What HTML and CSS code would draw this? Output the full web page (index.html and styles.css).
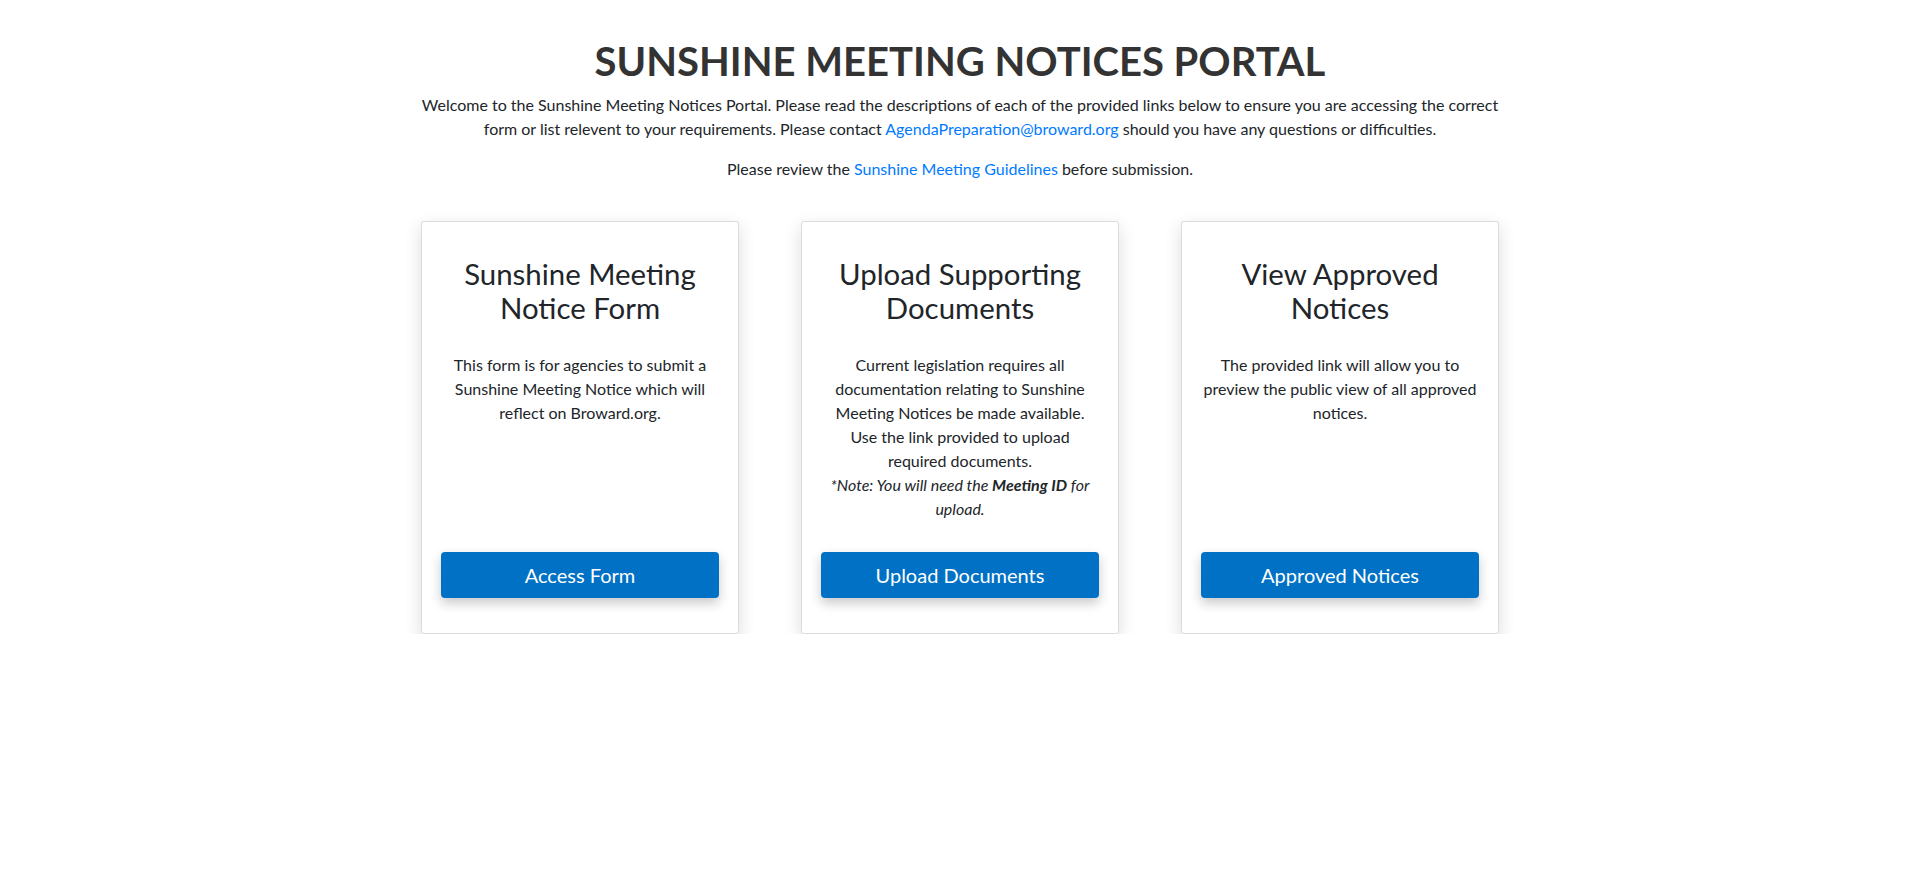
FILE: index.html
```html
<!DOCTYPE html>
<html lang="en">
<head>
<meta charset="utf-8">
<title>Sunshine Meeting Notices Portal</title>
<link rel="stylesheet" href="styles.css">
</head>
<body>
<main class="container">
  <header class="intro">
    <h1 class="page-title">SUNSHINE MEETING NOTICES PORTAL</h1>
    <p>Welcome to the Sunshine Meeting Notices Portal. Please read the descriptions of each of the provided links below to ensure you are accessing the correct form or list relevent to your requirements. Please contact <a href="#">AgendaPreparation@broward.org</a> should you have any questions or difficulties.</p>
    <p>Please review the <a href="#">Sunshine Meeting Guidelines</a> before submission.</p>
  </header>
  <section class="cards">
    <div class="col">
      <article class="card">
        <h3 class="card-title">Sunshine Meeting Notice Form</h3>
        <p class="card-text">This form is for agencies to submit a Sunshine Meeting Notice which will reflect on Broward.org.</p>
        <a class="btn" href="#">Access Form</a>
      </article>
    </div>
    <div class="col">
      <article class="card">
        <h3 class="card-title">Upload Supporting Documents</h3>
        <p class="card-text">Current legislation requires all documentation relating to Sunshine Meeting Notices be made available. Use the link provided to upload required documents.<br><em>*Note: You will need the <strong>Meeting ID</strong> for upload.</em></p>
        <a class="btn" href="#">Upload Documents</a>
      </article>
    </div>
    <div class="col">
      <article class="card">
        <h3 class="card-title">View Approved Notices</h3>
        <p class="card-text">The provided link will allow you to preview the public view of all approved notices.</p>
        <a class="btn" href="#">Approved Notices</a>
      </article>
    </div>
  </section>
</main>
</body>
</html>
```
FILE: styles.css
```css
* { box-sizing: border-box; }
html, body { margin: 0; padding: 0; background: #fff; }
body {
  font-family: Lato, "Open Sans", sans-serif;
  font-size: 16px;
  line-height: 1.5;
  color: #212529;
}
.container {
  width: 1140px;
  margin: 0 auto;
  padding: 37px 15px 0;
}
.intro { text-align: center; }
.page-title {
  margin: 0 0 8px;
  font-size: 40px;
  line-height: 48px;
  font-weight: 700;
  color: #333;
}
.intro p { margin: 0 0 16px; }
a { color: #007bff; text-decoration: none; }
.cards {
  display: flex;
  margin: 40px -15px 0;
}
.col {
  width: 380px;
  padding: 0 31px;
  display: flex;
}
.card {
  flex: 1;
  display: flex;
  flex-direction: column;
  align-items: stretch;
  text-align: center;
  border: 1px solid #dcdcdc;
  border-radius: 3px;
  background: #fff;
  box-shadow: 0 6px 18px rgba(0,0,0,.14);
  padding: 35px 19px 35px;
}
.card-title {
  margin: 0 0 29px;
  font-size: 29.4px;
  line-height: 33.6px;
  font-weight: 400;
  color: #212529;
}
.card-text { margin: 0 0 31px; }
.btn {
  margin-top: auto;
  display: block;
  height: 46px;
  line-height: 46px;
  font-size: 20px;
  color: #fff;
  background: #0071c5;
  border-radius: 4px;
  box-shadow: 0 5px 12px rgba(0,0,0,.22);
}
```
